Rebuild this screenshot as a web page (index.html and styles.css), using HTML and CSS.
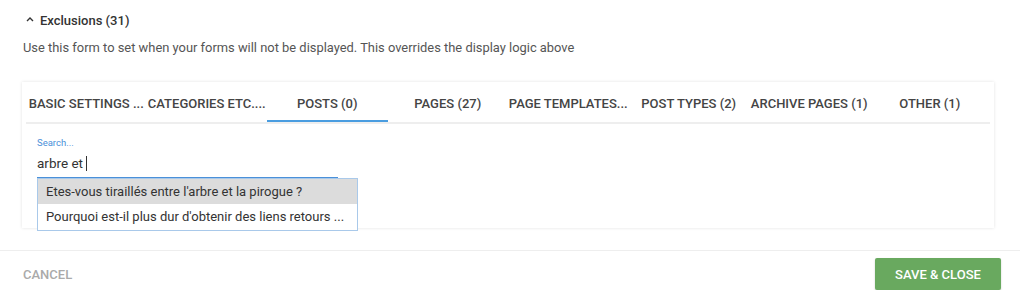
FILE: index.html
```html
<!DOCTYPE html>
<html>
<head>
<meta charset="utf-8">
<link rel="stylesheet" href="styles.css">
</head>
<body>
<div class="section">
  <div class="head">
    <svg class="chev" width="8" height="6" viewBox="0 0 8 6"><polyline points="1,5 4,2 7,5" fill="none" stroke="#333" stroke-width="1.4"/></svg>
    <span>Exclusions (31)</span>
  </div>
  <p class="desc">Use this form to set when your forms will not be displayed. This overrides the display logic above</p>
  <div class="card">
    <div class="tabs">
      <div class="tab">BASIC SETTINGS ...</div>
      <div class="tab">CATEGORIES ETC....</div>
      <div class="tab active">POSTS (0)</div>
      <div class="tab">PAGES (27)</div>
      <div class="tab">PAGE TEMPLATES...</div>
      <div class="tab">POST TYPES (2)</div>
      <div class="tab">ARCHIVE PAGES (1)</div>
      <div class="tab">OTHER (1)</div>
    </div>
    <div class="pane">
      <div class="label">Search...</div>
      <div class="input">arbre et <span class="caret"></span></div>
      <ul class="dropdown">
        <li class="item hl">Etes-vous tiraillés entre l'arbre et la pirogue ?</li>
        <li class="item">Pourquoi est-il plus dur d'obtenir des liens retours ...</li>
      </ul>
    </div>
  </div>
</div>
<div class="footer">
  <button class="cancel">CANCEL</button>
  <button class="save">SAVE &amp; CLOSE</button>
</div>
</body>
</html>
```
FILE: styles.css
```css
* { box-sizing: border-box; }
html, body { margin: 0; padding: 0; background: #fff; }
body { font-family: Roboto, "Noto Sans", sans-serif; color: #333; }

.section { padding: 10px 26px 0 23px; }

.head {
  display: flex;
  align-items: center;
  height: 20px;
  padding-left: 3px;
  font-size: 13px;
  font-weight: 500;
  color: #333;
}
.chev { margin-right: 6px; margin-top: -2px; }

.desc {
  margin: 8px 0 0 0;
  line-height: 20px;
  font-size: 12.9px;
  color: #555;
}

.card {
  position: relative;
  margin-top: 24px;
  margin-left: -1px;
  background: #fff;
  box-shadow: 0 0 3px rgba(0,0,0,0.12);
  padding: 0 4px;
  height: 146px;
}

.tabs {
  display: flex;
  height: 42px;
  border-bottom: 2px solid #eee;
}
.tab {
  flex: 1 1 0;
  min-width: 0;
  display: flex;
  align-items: center;
  justify-content: center;
  padding-top: 3px;
  font-size: 13px;
  font-weight: 500;
  color: #444;
  white-space: nowrap;
}
.tab.active {
  box-shadow: inset 0 -2px 0 #4a9de0;
}

.pane {
  position: relative;
  padding: 13px 0 0 11px;
}
.label {
  font-size: 9.5px;
  line-height: 12px;
  color: #4a90d9;
}
.input {
  margin-top: 4px;
  width: 301px;
  height: 25px;
  line-height: 20px;
  font-size: 13.5px;
  color: #333;
  border-bottom: 1px solid #4a90d9;
}
.caret {
  display: inline-block;
  width: 1px;
  height: 15px;
  background: #333;
  vertical-align: -3px;
}

.dropdown {
  position: absolute;
  left: 11px;
  top: 54px;
  width: 321px;
  margin: 0;
  padding: 0;
  list-style: none;
  background: #fff;
  border: 1px solid #a9c9ea;
  z-index: 2;
}
.item {
  height: 26px;
  line-height: 25px;
  padding-left: 8px;
  font-size: 13px;
  color: #333;
  white-space: nowrap;
}
.item.hl { background: #dcdcdc; height: 25px; }

.footer {
  margin-top: 22px;
  border-top: 1px solid #eee;
  display: flex;
  justify-content: space-between;
  align-items: center;
  padding: 7px 19px 0 23px;
}
.cancel {
  border: 0;
  background: none;
  padding: 0;
  font-family: Roboto, sans-serif;
  font-size: 13px;
  font-weight: 500;
  color: #aaa;
}
.save {
  border: 0;
  width: 126px;
  height: 32px;
  border-radius: 2px;
  background: #69a95f;
  color: #fff;
  font-family: Roboto, sans-serif;
  font-size: 13px;
  font-weight: 500;
  box-shadow: 0 1px 2px rgba(0,0,0,0.2);
}
```
